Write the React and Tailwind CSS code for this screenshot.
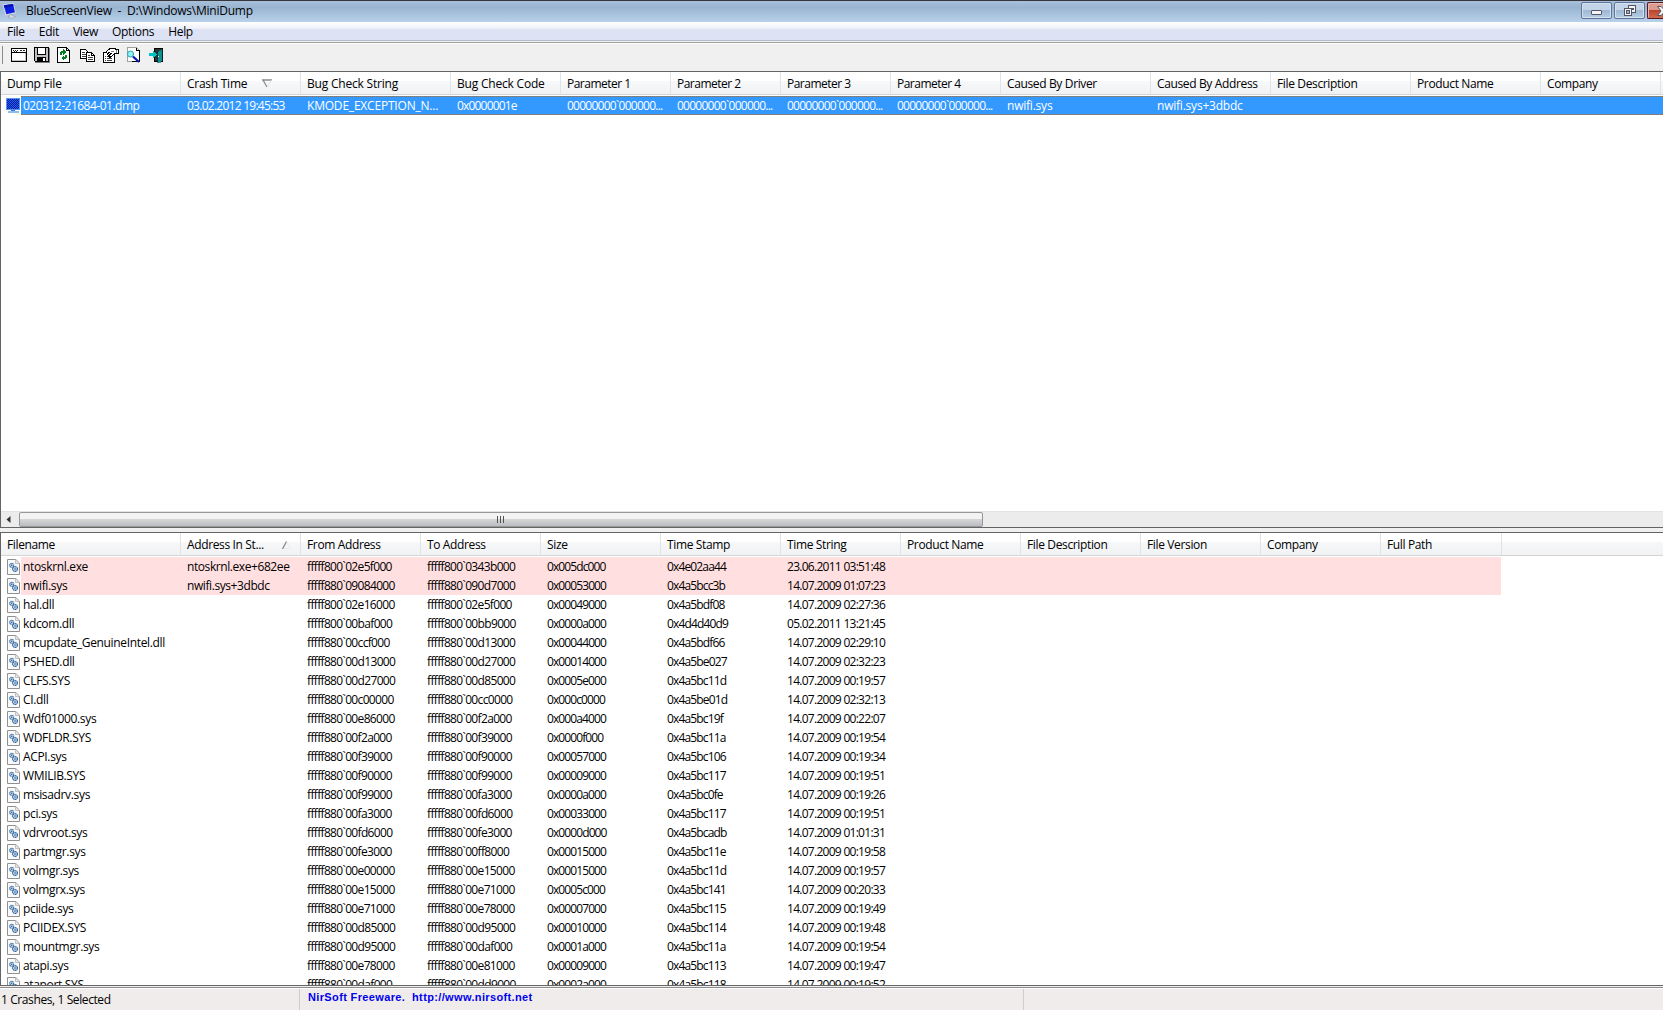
const MENU = ['File', 'Edit', 'View', 'Options', 'Help'];

const CRASH_COLUMNS = [
  { label: 'Dump File', width: 'w-[180px]', value: '020312-21684-01.dmp', tracking: 'tracking-[-0.5px]', labelTracking: 'tracking-[-0.22px]' },
  { label: 'Crash Time', width: 'w-[120px]', value: '03.02.2012 19:45:53', sort: 'desc', labelTracking: 'tracking-[-0.26px]' },
  { label: 'Bug Check String', width: 'w-[150px]', value: 'KMODE_EXCEPTION_N...', tracking: 'tracking-[-0.2px]', labelTracking: 'tracking-[-0.2px]' },
  { label: 'Bug Check Code', width: 'w-[110px]', value: '0x0000001e', tracking: 'tracking-[-0.82px]', labelTracking: 'tracking-[-0.2px]' },
  { label: 'Parameter 1', width: 'w-[110px]', value: '00000000`000000...', labelTracking: 'tracking-[-0.52px]' },
  { label: 'Parameter 2', width: 'w-[110px]', value: '00000000`000000...', labelTracking: 'tracking-[-0.52px]' },
  { label: 'Parameter 3', width: 'w-[110px]', value: '00000000`000000...', labelTracking: 'tracking-[-0.52px]' },
  { label: 'Parameter 4', width: 'w-[110px]', value: '00000000`000000...', labelTracking: 'tracking-[-0.52px]' },
  { label: 'Caused By Driver', width: 'w-[150px]', value: 'nwifi.sys', tracking: 'tracking-[-0.22px]' },
  { label: 'Caused By Address', width: 'w-[120px]', value: 'nwifi.sys+3dbdc', tracking: 'tracking-[-0.22px]' },
  { label: 'File Description', width: 'w-[140px]', value: '' },
  { label: 'Product Name', width: 'w-[130px]', value: '' },
  { label: 'Company', width: 'w-[120px]', value: '' },
];

const DRIVER_COLUMNS = [
  { label: 'Filename', width: 'w-[180px]' },
  { label: 'Address In St...', width: 'w-[120px]', sort: 'asc' },
  { label: 'From Address', width: 'w-[120px]' },
  { label: 'To Address', width: 'w-[120px]' },
  { label: 'Size', width: 'w-[120px]' },
  { label: 'Time Stamp', width: 'w-[120px]' },
  { label: 'Time String', width: 'w-[120px]' },
  { label: 'Product Name', width: 'w-[120px]' },
  { label: 'File Description', width: 'w-[120px]' },
  { label: 'File Version', width: 'w-[120px]' },
  { label: 'Company', width: 'w-[120px]' },
  { label: 'Full Path', width: 'w-[121px]' },
];

// name, address in stack, from, to, size, time stamp, time string
const DRIVERS = [
  ['ntoskrnl.exe', 'ntoskrnl.exe+682ee', 'fffff800`02e5f000', 'fffff800`0343b000', '0x005dc000', '0x4e02aa44', '23.06.2011 03:51:48'],
  ['nwifi.sys', 'nwifi.sys+3dbdc', 'fffff880`09084000', 'fffff880`090d7000', '0x00053000', '0x4a5bcc3b', '14.07.2009 01:07:23'],
  ['hal.dll', '', 'fffff800`02e16000', 'fffff800`02e5f000', '0x00049000', '0x4a5bdf08', '14.07.2009 02:27:36'],
  ['kdcom.dll', '', 'fffff800`00baf000', 'fffff800`00bb9000', '0x0000a000', '0x4d4d40d9', '05.02.2011 13:21:45'],
  ['mcupdate_GenuineIntel.dll', '', 'fffff880`00ccf000', 'fffff880`00d13000', '0x00044000', '0x4a5bdf66', '14.07.2009 02:29:10'],
  ['PSHED.dll', '', 'fffff880`00d13000', 'fffff880`00d27000', '0x00014000', '0x4a5be027', '14.07.2009 02:32:23'],
  ['CLFS.SYS', '', 'fffff880`00d27000', 'fffff880`00d85000', '0x0005e000', '0x4a5bc11d', '14.07.2009 00:19:57'],
  ['CI.dll', '', 'fffff880`00c00000', 'fffff880`00cc0000', '0x000c0000', '0x4a5be01d', '14.07.2009 02:32:13'],
  ['Wdf01000.sys', '', 'fffff880`00e86000', 'fffff880`00f2a000', '0x000a4000', '0x4a5bc19f', '14.07.2009 00:22:07'],
  ['WDFLDR.SYS', '', 'fffff880`00f2a000', 'fffff880`00f39000', '0x0000f000', '0x4a5bc11a', '14.07.2009 00:19:54'],
  ['ACPI.sys', '', 'fffff880`00f39000', 'fffff880`00f90000', '0x00057000', '0x4a5bc106', '14.07.2009 00:19:34'],
  ['WMILIB.SYS', '', 'fffff880`00f90000', 'fffff880`00f99000', '0x00009000', '0x4a5bc117', '14.07.2009 00:19:51'],
  ['msisadrv.sys', '', 'fffff880`00f99000', 'fffff880`00fa3000', '0x0000a000', '0x4a5bc0fe', '14.07.2009 00:19:26'],
  ['pci.sys', '', 'fffff880`00fa3000', 'fffff880`00fd6000', '0x00033000', '0x4a5bc117', '14.07.2009 00:19:51'],
  ['vdrvroot.sys', '', 'fffff880`00fd6000', 'fffff880`00fe3000', '0x0000d000', '0x4a5bcadb', '14.07.2009 01:01:31'],
  ['partmgr.sys', '', 'fffff880`00fe3000', 'fffff880`00ff8000', '0x00015000', '0x4a5bc11e', '14.07.2009 00:19:58'],
  ['volmgr.sys', '', 'fffff880`00e00000', 'fffff880`00e15000', '0x00015000', '0x4a5bc11d', '14.07.2009 00:19:57'],
  ['volmgrx.sys', '', 'fffff880`00e15000', 'fffff880`00e71000', '0x0005c000', '0x4a5bc141', '14.07.2009 00:20:33'],
  ['pciide.sys', '', 'fffff880`00e71000', 'fffff880`00e78000', '0x00007000', '0x4a5bc115', '14.07.2009 00:19:49'],
  ['PCIIDEX.SYS', '', 'fffff880`00d85000', 'fffff880`00d95000', '0x00010000', '0x4a5bc114', '14.07.2009 00:19:48'],
  ['mountmgr.sys', '', 'fffff880`00d95000', 'fffff880`00daf000', '0x0001a000', '0x4a5bc11a', '14.07.2009 00:19:54'],
  ['atapi.sys', '', 'fffff880`00e78000', 'fffff880`00e81000', '0x00009000', '0x4a5bc113', '14.07.2009 00:19:47'],
  ['ataport.SYS', '', 'fffff880`00daf000', 'fffff880`00dd9000', '0x0002a000', '0x4a5bc118', '14.07.2009 00:19:52'],
];

function AppIcon() {
  return (
    <svg width="15" height="16" viewBox="0 0 15 16">
      <path d="M.5 1.500 11.500 0l2.500 10L3.500 12.500z" fill="#d8dce6" />
      <path d="M1.800 2.300 11 1l2 8.300-8.700 2z" fill="#0d1fe0" />
      <path d="M1.800 2.300 11 1l.5 2L2.500 5z" fill="#0a12b4" />
      <path d="m7 12 3-.7.6 1.500 3 .6-3.600 2.300-4-1.400 1.600-1z" fill="#d4d6dc" stroke="#8b90a0" strokeWidth=".5" />
    </svg>
  );
}

function MonitorIcon() {
  return (
    <svg width="14" height="15" viewBox="0 0 14 15" shapeRendering="crispEdges">
      <rect width="14" height="12" fill="#5b93e8" />
      <rect x="1" y="1" width="12" height="10" fill="#0a1a9c" />
      <path d="M1 1.500h12M1 3.500h12M1 5.500h12M1 7.500h12M1 9.500h12" stroke="#1f5cf0" strokeDasharray="1 1" />
      <path d="M2 2.500h11M2 4.500h11M2 6.500h11M2 8.500h11M2 10.500h11" stroke="#1f5cf0" strokeDasharray="1 1" />
      <path d="M5 12h4v1H5z" fill="#3f78cc" />
      <path d="M2 13h11v2H2z" fill="#8fbdf2" />
    </svg>
  );
}

function WindowIcon() {
  return (
    <svg width="16" height="14" viewBox="0 0 16 14" shapeRendering="crispEdges">
      <path d="M0 0h16v14H0z" fill="#000" />
      <path d="M1 1h14v3H1zM1 5h14v8H1z" fill="#fff" />
      <path d="M2 2h1v1H2zM4 2h1v1H4zM6 2h1v1H6zM3 3h1v1H3zM5 3h1v1H5zM9 2h2v1H9zM12 2h2v1h-2z" fill="#202020" />
      <path d="M1 12h14v1H1zM14 5h1v8h-1z" fill="#c0c0c0" />
    </svg>
  );
}

function SaveIcon() {
  return (
    <svg width="16" height="16" viewBox="0 0 16 16" shapeRendering="crispEdges">
      <path d="M.5.5h14v14h-13l-1-1z" fill="#c0c0c0" stroke="#000" />
      <path d="M3.500.5h8v7h-8z" fill="#fff" stroke="#000" />
      <path d="M3 10h9v4H3z" fill="#000" />
      <path d="M9 11h2v3H9z" fill="#fff" />
      <path d="M15.500 1v15M1 15.500h15" stroke="#808080" />
    </svg>
  );
}

function RefreshIcon() {
  return (
    <svg width="13" height="16" viewBox="0 0 13 16" shapeRendering="crispEdges">
      <path d="M.5.5h9l3 3v12H.5z" fill="#fff" stroke="#000" />
      <path d="M9.500.5v3h3" fill="none" stroke="#000" />
      <path d="M3 8V5h1V4h2V2l3 3-3 3V6H5v2zM10 8v3H9v1H7v2l-3-3 3-3v2h1V8z" fill="#008020" />
    </svg>
  );
}

function CopyIcon() {
  return (
    <svg width="15" height="13" viewBox="0 0 15 13" shapeRendering="crispEdges">
      <path d="M.5.5h5l2 2v7h-7z" fill="#fff" stroke="#000" />
      <path d="M2 3.500h3M2 5.500h4M2 7.500h4" stroke="#404040" />
      <path d="M6.500 3.500h5l3 3v6h-8z" fill="#fff" stroke="#000" />
      <path d="M11.500 3.500v3h3" fill="none" stroke="#000" />
      <path d="M8 6.500h2M8 8.500h5M8 10.500h5" stroke="#404040" />
    </svg>
  );
}

function PropertiesIcon() {
  return (
    <svg width="16" height="15" viewBox="0 0 16 15" shapeRendering="crispEdges">
      <path d="M.5 4.500h11v10H.5z" fill="#fff" stroke="#000" />
      <path d="M2 8.500h1M4 8.500h4M2 10.500h1M4 10.500h5M2 12.500h1M4 12.500h5" stroke="#404040" />
      <path d="M3.500 3.500 7 .5h5l1 1h2.500v4H12l-5 4-1.500-1.500L8 5.500 6 4.500 4.500 6z" fill="#fff" stroke="#000" />
      <path d="M8 3h3v1H8zM13 2h1v3h-1z" fill="#808080" />
    </svg>
  );
}

function FindIcon() {
  return (
    <svg width="15" height="16" viewBox="0 0 15 16">
      <path d="M1.500.5h9l3 3v11h-12z" fill="#fff" stroke="#a0a0a0" shapeRendering="crispEdges" />
      <path d="M10.500.5v3h3v11h-8" fill="none" stroke="#000" shapeRendering="crispEdges" />
      <circle cx="4.500" cy="7" r="3" fill="#8ff4f4" stroke="#30a0b0" />
      <path d="m7 9.500 6 5.500" stroke="#0018b0" strokeWidth="2.200" />
    </svg>
  );
}

function ExitIcon() {
  return (
    <svg width="15" height="15" viewBox="0 0 15 15" shapeRendering="crispEdges">
      <path d="M5.500.5h8v13h-8z" fill="#303030" stroke="#000" />
      <path d="m8.500 3 4.500-2v12l-4.500 2z" fill="#109090" stroke="#003c3c" strokeWidth=".6" />
      <path d="M9 8h1v1H9z" fill="#fff" />
      <path d="M0 5h4V2l4 4.500L4 11V8H0z" fill="#00c4c4" />
    </svg>
  );
}

const TOOLS = [WindowIcon, SaveIcon, RefreshIcon, CopyIcon, PropertiesIcon, FindIcon, ExitIcon];

function FileIcon() {
  return (
    <svg width="13" height="16" viewBox="0 0 13 16" className="shrink-0">
      <path d="M.5.5h8.300l3.700 3.700v11.300H.5z" fill="#fafafa" stroke="#909090" />
      <path d="M8.500.8v3.700h3.800" fill="#e6e6e6" stroke="#b4b4b4" strokeWidth=".8" />
      <circle cx="4.700" cy="6.300" r="2" fill="#cfe0f0" stroke="#3a70a6" strokeWidth="1.100" strokeDasharray="1.400 .4" />
      <circle cx="8" cy="10" r="2.400" fill="#cfe0f0" stroke="#2f659c" strokeWidth="1.300" strokeDasharray="1.600 .4" />
      <circle cx="8" cy="10" r=".8" fill="#20508a" />
      <circle cx="4.700" cy="6.300" r=".7" fill="#20508a" />
    </svg>
  );
}

function SortMark({ dir }) {
  if (dir === 'desc') {
    return (
      <svg width="11" height="9" viewBox="0 0 11 9" className="ml-[15px]">
        <path d="M0 1h10M1 1l4 7" stroke="#8c8c8c" strokeWidth="1.300" fill="none" />
        <path d="m5.500 8 4-7" stroke="#e4e4e4" fill="none" />
      </svg>
    );
  }
  return (
    <svg width="9" height="8" viewBox="0 0 9 8" className="ml-[18px]">
      <path d="m.5 8 4-7.500" stroke="#8c8c8c" strokeWidth="1.300" />
      <path d="m5 1 3.500 6.500H2" stroke="#ececec" fill="none" />
    </svg>
  );
}

function ListHeader({ columns }) {
  return (
    <div className="flex h-[24px] shrink-0 bg-white">
      <div className="flex h-[23px] w-full border-b border-[#d5d5d5] bg-linear-to-b from-white from-40% via-[#f7f8fa] via-41% to-[#f1f2f4]">
        {columns.map((col) => (
          <div
            key={col.label}
            className={`${col.width} ${col.labelTracking || 'tracking-[-0.36px]'} flex shrink-0 items-center border-r border-[#e2e3e5] pt-px pl-[6px] whitespace-pre text-black`}
          >
            {col.label}
            {col.sort && <SortMark dir={col.sort} />}
          </div>
        ))}
      </div>
    </div>
  );
}

function WindowButtons() {
  return (
    <div className="flex h-[17px] shrink-0 gap-[2px]">
      <div className="flex w-[31px] items-end justify-center rounded-[2px] border border-[#60759a] bg-linear-to-b from-[#c3d4e8] from-45% via-[#9fb6d2] via-46% to-[#b7cee6] pb-[3px] shadow-[inset_0_0_0_1px_#d3e0ee]">
        <div className="h-[5px] w-[11px] rounded-[1px] border border-[#535666] bg-[#f4f4f4]" />
      </div>
      <div className="flex w-[31px] items-center justify-center rounded-[2px] border border-[#60759a] bg-linear-to-b from-[#c3d4e8] from-45% via-[#9fb6d2] via-46% to-[#b7cee6] shadow-[inset_0_0_0_1px_#d3e0ee]">
        <svg width="12" height="11" viewBox="0 0 12 11" shapeRendering="crispEdges">
          <path d="M4.500.5h7v7h-7z" fill="#f4f4f4" stroke="#535666" />
          <path d="M7 3.500h2v1H7z" fill="#9fb6d2" stroke="#535666" />
          <path d="M.5 3.500h7v7h-7z" fill="#f4f4f4" stroke="#535666" />
          <path d="M2.500 5.500h3v3h-3z" fill="#9fb6d2" stroke="#535666" />
        </svg>
      </div>
      <div className="flex w-[16px] items-center justify-end overflow-hidden rounded-l-[2px] border border-r-0 border-[#5a1820] bg-linear-to-b from-[#dd9a8e] from-45% via-[#b8412c] via-46% to-[#cf6b4e] shadow-[inset_1px_1px_0_0_#e9b9b0]">
        <svg width="6" height="10" viewBox="0 0 6 10">
          <path d="M.5.5h3.500l3 3 3-3v9l-3-3-3 3H.5L4 5z" fill="#f4f4f4" stroke="#535666" />
        </svg>
      </div>
    </div>
  );
}

function TitleBar() {
  return (
    <div className="flex h-[22px] shrink-0 items-start border-t border-[#35373c] bg-linear-to-b from-[#a9bfda] via-[#99b4d1] via-30% to-[#b9d1ea] pt-px">
      <div className="flex h-[18px] flex-1 items-center pl-[2px]">
        <AppIcon />
        <span className="pl-[9px] tracking-[-0.24px] whitespace-pre text-black">BlueScreenView  -  D:\Windows\MiniDump</span>
      </div>
      <WindowButtons />
    </div>
  );
}

function MenuBar() {
  return (
    <div className="flex h-[22px] shrink-0 flex-col">
      <div className="flex h-[18px] items-center gap-[14px] bg-linear-to-b from-white via-[#eff1f8] via-35% to-[#dde3f4] to-40% pt-[2px] pl-[7px] tracking-[-0.3px] text-black">
        {MENU.map((item) => (
          <span key={item}>{item}</span>
        ))}
      </div>
      <div className="h-px bg-[#b6bccc]" />
      <div className="h-px bg-[#f0f0f0]" />
      <div className="h-px bg-[#a0a0a0]" />
      <div className="h-px bg-white" />
    </div>
  );
}

function Toolbar() {
  return (
    <div className="flex h-[27px] shrink-0 items-center bg-[#f0f0f0] pb-[5px] pl-[2px]">
      <div className="mr-[8px] h-[18px] w-px bg-[#8c8c8c]" />
      {TOOLS.map((Icon) => (
        <div key={Icon.name} className="w-[23px] shrink-0">
          <Icon />
        </div>
      ))}
    </div>
  );
}

function CrashRow() {
  return (
    <div className="flex h-[19px] shrink-0">
      <div className="flex w-[20px] shrink-0 items-center pl-[5px]">
        <MonitorIcon />
      </div>
      <div className="flex flex-1 items-center overflow-hidden border-y border-dotted border-[#cc6600] bg-[#3399ff] text-white">
        {CRASH_COLUMNS.map((col, i) => (
          <div
            key={col.label}
            className={`${i === 0 ? 'w-[160px] pl-[2px]' : `${col.width} pl-[6px]`} ${col.tracking || 'tracking-[-0.74px]'} shrink-0 whitespace-pre`}
          >
            {col.value}
          </div>
        ))}
      </div>
    </div>
  );
}

function ScrollBar() {
  return (
    <div className="flex h-[16px] shrink-0 border-t border-[#e3e3e3] bg-[#ececec]">
      <div className="flex w-[18px] items-center justify-center pr-[3px] pb-px">
        <svg width="5" height="7" viewBox="0 0 5 7">
          <path d="M4.500 0v7L.5 3.500z" fill="#303030" />
        </svg>
      </div>
      <div className="flex h-[15px] w-[964px] items-center justify-center gap-[2px] rounded-[2px] border border-[#979797] bg-linear-to-b from-[#f3f3f3] from-45% via-[#d6d7d9] via-46% to-[#bcbdc0] pr-[2px] pb-px">
        <div className="h-[7px] w-px bg-[#505050]" />
        <div className="h-[7px] w-px bg-[#505050]" />
        <div className="h-[7px] w-px bg-[#505050]" />
      </div>
    </div>
  );
}

function CrashList() {
  return (
    <div className="flex h-[457px] shrink-0 flex-col overflow-hidden border-y border-l border-[#646464] bg-white">
      <ListHeader columns={CRASH_COLUMNS} />
      <CrashRow />
      <div className="flex-1" />
      <ScrollBar />
    </div>
  );
}

function DriverRow({ driver, inStack }) {
  const [name, stack, from, to, size, stamp, time] = driver;
  return (
    <div className="flex h-[19px] shrink-0">
      <div className="flex w-[20px] shrink-0 items-center pl-[6px]">
        <FileIcon />
      </div>
      <div className={`flex w-[1480px] items-center whitespace-pre text-black ${inStack ? 'bg-[#ffdfdf]' : ''}`}>
        <div className="w-[159px] pl-[2px] tracking-[-0.34px]">{name}</div>
        <div className="w-[120px] pl-[7px] tracking-[-0.42px]">{stack}</div>
        <div className="w-[120px] pl-[7px] tracking-[-0.66px]">{from}</div>
        <div className="w-[120px] pl-[7px] tracking-[-0.66px]">{to}</div>
        <div className="w-[120px] pl-[7px] tracking-[-0.9px]">{size}</div>
        <div className="w-[120px] pl-[7px] tracking-[-0.85px]">{stamp}</div>
        <div className="w-[120px] pl-[7px] tracking-[-0.72px]">{time}</div>
      </div>
    </div>
  );
}

function DriverList() {
  return (
    <div className="flex h-[454px] shrink-0 flex-col overflow-hidden border-y border-l border-[#646464] bg-white">
      <ListHeader columns={DRIVER_COLUMNS} />
      <div className="flex-1 overflow-hidden">
        {DRIVERS.map((driver) => (
          <DriverRow key={driver[0]} driver={driver} inStack={driver[1] !== ''} />
        ))}
      </div>
    </div>
  );
}

function StatusBar() {
  return (
    <div className="flex flex-1 border-t border-[#8c8c8c] bg-white pt-px">
      <div className="flex flex-1 bg-[#f0eceb] text-black">
        <div className="w-[300px] border-r border-[#d0cccb] pt-[3px] pl-[1px] tracking-[-0.4px]">1 Crashes, 1 Selected</div>
        <div className="w-[724px] border-r border-[#d0cccb] pl-[8px] font-['Liberation_Sans',Arial,sans-serif] text-[11px] font-bold tracking-[0.36px] whitespace-pre text-[#0000ee]">
          NirSoft Freeware.  http://www.nirsoft.net
        </div>
      </div>
    </div>
  );
}

export default function App() {
  return (
    <div className="flex h-[1010px] w-[1663px] flex-col overflow-hidden bg-[#f0f0f0] font-['Open_Sans','Noto_Sans',sans-serif] text-[12px] leading-[16px]">
      <TitleBar />
      <MenuBar />
      <Toolbar />
      <CrashList />
      <div className="h-[4px] shrink-0" />
      <DriverList />
      <div className="h-px shrink-0 bg-[#f0f0f0]" />
      <StatusBar />
    </div>
  );
}
